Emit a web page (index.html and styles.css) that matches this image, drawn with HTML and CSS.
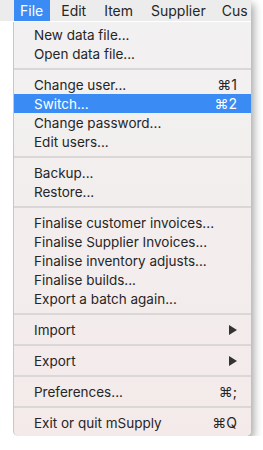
FILE: index.html
```html
<!DOCTYPE html>
<html lang="en">

<head>
    <meta charset="UTF-8">
    <meta name="viewport" content="width=device-width, initial-scale=1.0">
    <title>mSupply File menu</title>
    <link rel="stylesheet" href="styles.css">
</head>

<body>

    <div class="screen">
        <nav class="menubar">
            <span class="menubar-item active">File</span>
            <span class="menubar-item">Edit</span>
            <span class="menubar-item">Item</span>
            <span class="menubar-item">Supplier</span>
            <span class="menubar-item">Cus</span>
        </nav>

        <ul class="menu">
            <li class="menu-item">New data file...</li>
            <li class="menu-item">Open data file...</li>
            <li class="separator"></li>
            <li class="menu-item">Change user... <span class="shortcut">&#8984;1</span></li>
            <li class="menu-item selected">Switch... <span class="shortcut">&#8984;2</span></li>
            <li class="menu-item">Change password...</li>
            <li class="menu-item">Edit users...</li>
            <li class="separator"></li>
            <li class="menu-item">Backup...</li>
            <li class="menu-item">Restore...</li>
            <li class="separator"></li>
            <li class="menu-item">Finalise customer invoices...</li>
            <li class="menu-item">Finalise Supplier Invoices...</li>
            <li class="menu-item">Finalise inventory adjusts...</li>
            <li class="menu-item">Finalise builds...</li>
            <li class="menu-item">Export a batch again...</li>
            <li class="separator"></li>
            <li class="menu-item">Import <span class="submenu-arrow"></span></li>
            <li class="separator"></li>
            <li class="menu-item">Export <span class="submenu-arrow"></span></li>
            <li class="separator"></li>
            <li class="menu-item">Preferences... <span class="shortcut">&#8984;;</span></li>
            <li class="separator"></li>
            <li class="menu-item">Exit or quit mSupply <span class="shortcut">&#8984;Q</span></li>
        </ul>
    </div>

</body>

</html>
```

FILE: styles.css
```css
body {
    font-family: 'Inter', 'Liberation Sans', sans-serif;
    background-color: #fff;
    color: #262626;
    margin: 0;
    padding: 0;
}

.screen {
    width: 251px;
    box-shadow: 3px 4px 8px rgba(0, 0, 0, 0.35);
    background-color: #fff;
    border-bottom-right-radius: 5px;
}

.menubar {
    display: flex;
    height: 21px;
    padding-left: 14px;
    background-color: #ececec;
    font-size: 14px;
    line-height: 21px;
    white-space: nowrap;
    overflow: hidden;
}

.menubar-item {
    padding: 0 7px 0 6px;
    margin-right: 5px;
}

.menubar-item:last-child {
    padding-left: 4px;
}

.menubar-item.active {
    background-color: #3a8cf4;
    color: #fff;
}

.menu {
    list-style: none;
    margin: 1px 0 0 13px;
    padding: 3px 0 4px;
    width: 238px;
    box-sizing: border-box;
    background: linear-gradient(#f2f1f1, #f4eaea);
    border-left: 1px solid #c9c6c6;
    border-bottom-left-radius: 5px;
    border-bottom-right-radius: 5px;
    font-size: 13.5px;
}

.menu-item {
    display: flex;
    justify-content: space-between;
    align-items: center;
    height: 19px;
    padding: 0 14px 0 20px;
    white-space: nowrap;
}

.menu-item.selected {
    background-color: #3a8cf4;
    color: #fff;
}

.shortcut {
    font-size: 14px;
}

.submenu-arrow {
    width: 0;
    height: 0;
    border-top: 5px solid transparent;
    border-bottom: 5px solid transparent;
    border-left: 8px solid #333;
}

.separator {
    height: 2px;
    margin: 5px 0;
    background-color: #dcd7d7;
}
```
